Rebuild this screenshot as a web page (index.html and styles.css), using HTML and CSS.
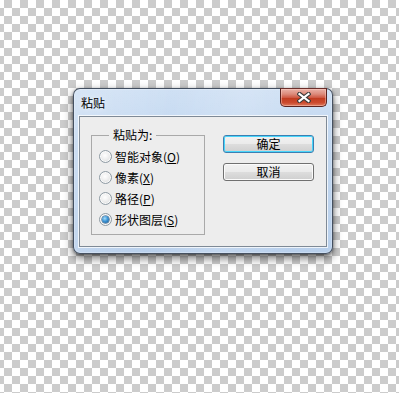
FILE: index.html
```html
<!DOCTYPE html>
<html lang="zh-CN">
<head>
<meta charset="utf-8">
<title>粘贴</title>
<link rel="stylesheet" href="styles.css">
</head>
<body>
<div class="desk">
  <div class="window">
    <div class="titlebar">
      <span class="title">粘贴</span>
      <button class="close" aria-label="关闭">
        <svg width="14" height="11" viewBox="0 0 14 11">
          <path d="M2.5 2 L11.5 9 M11.5 2 L2.5 9" stroke="#3b3b3b" stroke-width="4.2" stroke-linecap="square" fill="none"/>
          <path d="M2.5 2 L11.5 9 M11.5 2 L2.5 9" stroke="#ffffff" stroke-width="2.2" stroke-linecap="square" fill="none"/>
        </svg>
      </button>
    </div>
    <div class="client">
      <fieldset class="group">
        <legend class="legend">粘贴为:</legend>
        <label class="opt"><span class="radio"></span>智能对象(<u>O</u>)</label>
        <label class="opt"><span class="radio"></span>像素(<u>X</u>)</label>
        <label class="opt"><span class="radio"></span>路径(<u>P</u>)</label>
        <label class="opt"><span class="radio on"></span>形状图层(<u>S</u>)</label>
      </fieldset>
      <div class="buttons">
        <button class="btn default">确定</button>
        <button class="btn">取消</button>
      </div>
    </div>
  </div>
</div>
</body>
</html>
```

FILE: styles.css
```css
* { box-sizing: border-box; }
html, body { margin: 0; padding: 0; }
body {
  width: 399px;
  height: 393px;
  overflow: hidden;
  background-color: #ffffff;
  background-image: repeating-conic-gradient(#cccccc 0 25%, #ffffff 0 50%);
  background-size: 16px 16px;
  background-position: 12px 0;
  font-family: "Noto Sans CJK SC", "Noto Sans", sans-serif;
  font-size: 12px;
  color: #000;
}
.desk {
  padding: 88px 0 0 73px;
}
.window {
  width: 260px;
  height: 166px;
  border: 1px solid rgba(45, 55, 70, 0.85);
  border-radius: 7px;
  padding: 0 5px 6px 5px;
  background:
    linear-gradient(100deg, rgba(255,255,255,0.18) 0%, rgba(255,255,255,0) 35%, rgba(255,255,255,0.15) 60%, rgba(255,255,255,0) 85%),
    linear-gradient(#cfe0f4 0%, #c3d8f0 30%, #b9d0ec 100%);
  box-shadow: 0 0 0 1px rgba(255,255,255,0.25) inset, 0 4px 10px rgba(0,0,0,0.55), 0 1px 3px rgba(0,0,0,0.4);
  display: flex;
  flex-direction: column;
}
.titlebar {
  height: 27px;
  display: flex;
  justify-content: space-between;
  align-items: flex-start;
}
.title {
  margin: 6px 0 0 2px;
  line-height: 16px;
  font-size: 12px;
  color: #000;
  text-shadow: 0 0 6px rgba(255,255,255,0.9);
}
.close {
  margin: -1px 0 0 0;
  width: 47px;
  height: 19px;
  padding: 0;
  border: 1px solid #5a2320;
  border-top-color: #6a2e2a;
  border-radius: 0 0 5px 5px;
  background: linear-gradient(#eab2a8 0%, #dc8a7a 30%, #cf5a45 50%, #c13c20 55%, #cc4a2e 80%, #dc7a5e 100%);
  box-shadow: inset 0 0 0 1px rgba(255,210,200,0.45);
  display: flex;
  align-items: center;
  justify-content: center;
}
.close svg { display: block; }
.client {
  flex: 1;
  border: 1px solid #7f8a96;
  box-shadow: 0 0 0 1px rgba(255,255,255,0.75);
  background: #ededed;
  display: flex;
  align-items: flex-start;
}
.group {
  margin: 11px 0 0 11px;
  width: 114px;
  height: 107px;
  border: 1px solid #a9a9a9;
  padding: 4px 0 0 7px;
  min-width: 0;
}
.legend {
  margin-left: 10px;
  padding: 0 4px;
  line-height: 14px;
  font-size: 12px;
}
.opt {
  display: flex;
  align-items: center;
  height: 21px;
  line-height: 14px;
  white-space: nowrap;
}
.opt u { text-decoration-thickness: 1px; text-underline-offset: 1px; }
.radio {
  width: 13px;
  height: 13px;
  border-radius: 50%;
  margin-right: 3px;
  border: 1px solid #8f9ba4;
  background: radial-gradient(circle at 45% 40%, #ffffff 0%, #f0f0f0 40%, #cfd2d4 100%);
  box-shadow: inset 0 0 0 1px rgba(255,255,255,0.8);
  position: relative;
  flex: none;
}
.radio.on::after {
  content: "";
  position: absolute;
  left: 2px;
  top: 2px;
  width: 7px;
  height: 7px;
  border-radius: 50%;
  background: radial-gradient(circle at 40% 35%, #a9def9 0%, #3d95d6 45%, #114f86 100%);
  box-shadow: 0 0 0 0.5px #1d4a75;
}
.buttons {
  margin: 18px 0 0 18px;
  display: flex;
  flex-direction: column;
  gap: 10px;
}
.btn {
  width: 91px;
  height: 18px;
  padding: 0;
  font-family: "Noto Sans CJK SC", "Noto Sans", sans-serif;
  font-size: 12px;
  line-height: 14px;
  color: #000;
  border: 1px solid #707070;
  border-radius: 3px;
  background: linear-gradient(#f2f2f2 0%, #ebebeb 48%, #dddddd 52%, #cfcfcf 100%);
  box-shadow: inset 0 0 0 1px #fbfbfb;
}
.btn.default {
  border-color: #3c7fb1;
  box-shadow: inset 0 0 0 1px #48d6fb;
  background: linear-gradient(#eaf6fd 0%, #d9f0fc 48%, #bee6fd 52%, #a7d9f5 100%);
  background: linear-gradient(#f2f2f2 0%, #ebebeb 48%, #dddddd 52%, #cfcfcf 100%);
}
```
